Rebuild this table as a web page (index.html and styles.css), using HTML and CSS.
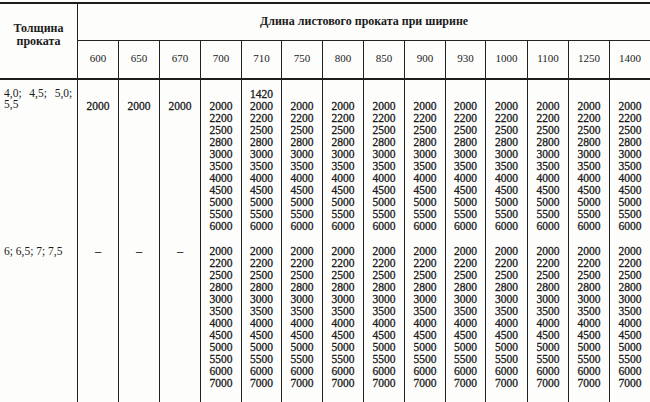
FILE: index.html
```html
<!DOCTYPE html>
<html lang="ru">
<head>
<meta charset="utf-8">
<link rel="stylesheet" href="styles.css">
</head>
<body>
<table class="grid">
  <colgroup>
    <col class="c77">
    <col class="c41"><col class="c41"><col class="c41"><col class="c41">
    <col class="c40"><col class="c41"><col class="c41"><col class="c41">
    <col class="c41"><col class="c40"><col class="c42"><col class="c41">
    <col class="c41"><col class="c41">
  </colgroup>
  <thead>
    <tr class="h1">
      <th class="thick" rowspan="2">Толщина<br>проката</th>
      <th class="title" colspan="14">Длина листового проката при ширине</th>
    </tr>
    <tr class="h2">
      <th class="w">600</th><th class="w">650</th><th class="w">670</th><th class="w">700</th>
      <th class="w">710</th><th class="w">750</th><th class="w">800</th><th class="w">850</th>
      <th class="w">900</th><th class="w">930</th><th class="w">1000</th><th class="w">1100</th>
      <th class="w">1250</th><th class="w">1400</th>
    </tr>
  </thead>
  <tbody>
    <tr class="r1">
      <td class="thk">4,0;&nbsp; 4,5;&nbsp; 5,0;<br>5,5</td>
      <td class="v skip">2000</td>
      <td class="v skip">2000</td>
      <td class="v skip">2000</td>
      <td class="v skip">2000<br>2200<br>2500<br>2800<br>3000<br>3500<br>4000<br>4500<br>5000<br>5500<br>6000</td>
      <td class="v">1420<br>2000<br>2200<br>2500<br>2800<br>3000<br>3500<br>4000<br>4500<br>5000<br>5500<br>6000</td>
      <td class="v skip">2000<br>2200<br>2500<br>2800<br>3000<br>3500<br>4000<br>4500<br>5000<br>5500<br>6000</td>
      <td class="v skip">2000<br>2200<br>2500<br>2800<br>3000<br>3500<br>4000<br>4500<br>5000<br>5500<br>6000</td>
      <td class="v skip">2000<br>2200<br>2500<br>2800<br>3000<br>3500<br>4000<br>4500<br>5000<br>5500<br>6000</td>
      <td class="v skip">2000<br>2200<br>2500<br>2800<br>3000<br>3500<br>4000<br>4500<br>5000<br>5500<br>6000</td>
      <td class="v skip">2000<br>2200<br>2500<br>2800<br>3000<br>3500<br>4000<br>4500<br>5000<br>5500<br>6000</td>
      <td class="v skip">2000<br>2200<br>2500<br>2800<br>3000<br>3500<br>4000<br>4500<br>5000<br>5500<br>6000</td>
      <td class="v skip">2000<br>2200<br>2500<br>2800<br>3000<br>3500<br>4000<br>4500<br>5000<br>5500<br>6000</td>
      <td class="v skip">2000<br>2200<br>2500<br>2800<br>3000<br>3500<br>4000<br>4500<br>5000<br>5500<br>6000</td>
      <td class="v skip">2000<br>2200<br>2500<br>2800<br>3000<br>3500<br>4000<br>4500<br>5000<br>5500<br>6000</td>
    </tr>
    <tr class="r2">
      <td class="thk">6; 6,5; 7; 7,5</td>
      <td class="v">–</td>
      <td class="v">–</td>
      <td class="v">–</td>
      <td class="v">2000<br>2200<br>2500<br>2800<br>3000<br>3500<br>4000<br>4500<br>5000<br>5500<br>6000<br>7000</td>
      <td class="v">2000<br>2200<br>2500<br>2800<br>3000<br>3500<br>4000<br>4500<br>5000<br>5500<br>6000<br>7000</td>
      <td class="v">2000<br>2200<br>2500<br>2800<br>3000<br>3500<br>4000<br>4500<br>5000<br>5500<br>6000<br>7000</td>
      <td class="v">2000<br>2200<br>2500<br>2800<br>3000<br>3500<br>4000<br>4500<br>5000<br>5500<br>6000<br>7000</td>
      <td class="v">2000<br>2200<br>2500<br>2800<br>3000<br>3500<br>4000<br>4500<br>5000<br>5500<br>6000<br>7000</td>
      <td class="v">2000<br>2200<br>2500<br>2800<br>3000<br>3500<br>4000<br>4500<br>5000<br>5500<br>6000<br>7000</td>
      <td class="v">2000<br>2200<br>2500<br>2800<br>3000<br>3500<br>4000<br>4500<br>5000<br>5500<br>6000<br>7000</td>
      <td class="v">2000<br>2200<br>2500<br>2800<br>3000<br>3500<br>4000<br>4500<br>5000<br>5500<br>6000<br>7000</td>
      <td class="v">2000<br>2200<br>2500<br>2800<br>3000<br>3500<br>4000<br>4500<br>5000<br>5500<br>6000<br>7000</td>
      <td class="v">2000<br>2200<br>2500<br>2800<br>3000<br>3500<br>4000<br>4500<br>5000<br>5500<br>6000<br>7000</td>
      <td class="v">2000<br>2200<br>2500<br>2800<br>3000<br>3500<br>4000<br>4500<br>5000<br>5500<br>6000<br>7000</td>
    </tr>
  </tbody>
</table>
</body>
</html>
```
FILE: styles.css
```css
html, body {
  margin: 0;
  padding: 0;
  background: #fdfdfc;
  overflow: hidden;
}

body {
  font-family: "Liberation Serif", "Times New Roman", serif;
  color: #1b1b1b;
}

.grid {
  margin-top: 2px;
  width: 650px;
  table-layout: fixed;
  border-collapse: separate;
  border-spacing: 0;
  border-top: 2px solid #1e1e1e;
}

.c77 { width: 77px; }
.c41 { width: 41px; }
.c40 { width: 40px; }
.c42 { width: 42px; }

th, td {
  padding: 0;
  margin: 0;
}

.grid th {
  font-weight: normal;
}

.h1 th {
  height: 34px;
}

.thick {
  font-weight: bold !important;
  font-size: 12px;
  line-height: 13px;
  text-align: center;
  vertical-align: top;
  padding-top: 18px !important;
  border-bottom: 2px solid #1e1e1e;
}

.title {
  font-weight: bold !important;
  font-size: 12px;
  text-align: center;
  vertical-align: middle;
  border-left: 1px solid #222;
  border-bottom: 1px solid #222;
  padding-bottom: 2px !important;
}

.h2 th {
  height: 34px;
}

.w {
  font-size: 11px;
  text-align: center;
  vertical-align: middle;
  border-left: 1px solid #222;
  border-bottom: 2px solid #1e1e1e;
  padding-bottom: 3px !important;
}

td {
  vertical-align: top;
}

.v {
  border-left: 1px solid #222;
  text-align: center;
  font-size: 11.5px;
  line-height: 12px;
  -webkit-text-stroke: 0.3px #1b1b1b;
}

.thk {
  font-size: 11.5px;
  line-height: 11px;
  text-align: left;
  padding-left: 4px !important;
  word-spacing: 1px;
}

.r1 td {
  padding-top: 8px;
  padding-bottom: 5px;
}

.r1 td.skip {
  padding-top: 20px;
}

.r2 td {
  padding-top: 8px;
  padding-bottom: 30px;
}

.r2 .thk {
  line-height: 12px;
  font-size: 11.5px;
  white-space: nowrap;
  word-spacing: 0;
}
```
